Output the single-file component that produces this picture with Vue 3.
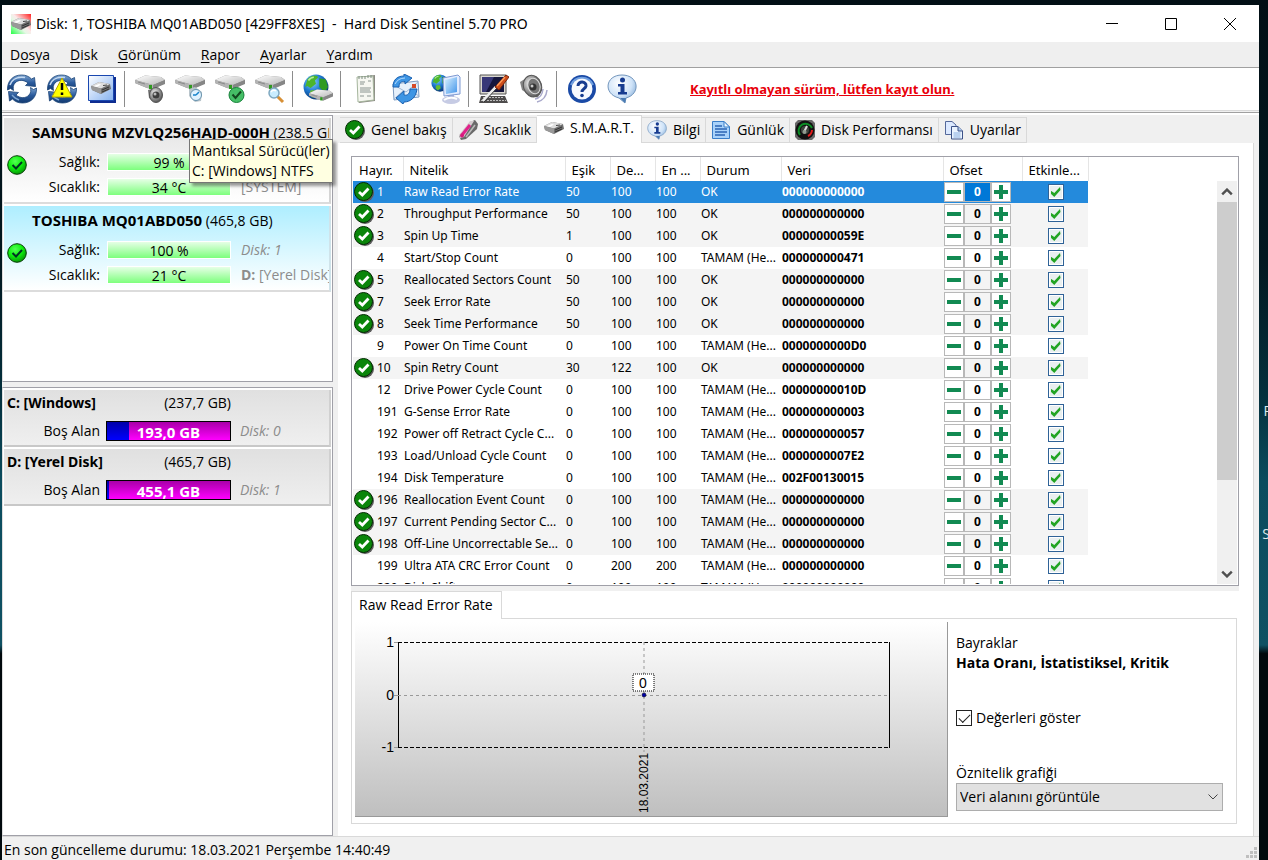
<script setup>
import { ref } from 'vue'

const menu = [
  ['D', 'o', 'sya'], ['', 'D', 'isk'], ['', 'G', 'örünüm'],
  ['', 'R', 'apor'], ['', 'A', 'yarlar'], ['', 'Y', 'ardım'],
]

const toolGroups = [
  ['refresh', 'refresh-warn', 'panel'],
  ['drive-sound', 'drive-clock', 'drive-ok', 'drive-search'],
  ['drive-web'],
  ['report', 'mail', 'network'],
  ['configure', 'speaker'],
  ['help', 'info'],
]

const disks = [
  { name: 'SAMSUNG MZVLQ256HAJD-000H', size: '(238.5 GB)', health: '99 %', temp: '34 °C', disk: 'Disk: 0', letter: '', vol: '[SYSTEM]' },
  { name: 'TOSHIBA MQ01ABD050', size: '(465,8 GB)', health: '100 %', temp: '21 °C', disk: 'Disk: 1', letter: 'D:', vol: '[Yerel Disk]', active: true },
]

const drives = [
  { name: 'C: [Windows]', size: '(237,7 GB)', free: '193,0 GB', used: 18, disk: 'Disk: 0' },
  { name: 'D: [Yerel Disk]', size: '(465,7 GB)', free: '455,1 GB', used: 2, disk: 'Disk: 1' },
]

const tabs = [
  { label: 'Genel bakış', icon: 'ok' },
  { label: 'Sıcaklık', icon: 'thermo' },
  { label: 'S.M.A.R.T.', icon: 'smart', active: true },
  { label: 'Bilgi', icon: 'info' },
  { label: 'Günlük', icon: 'page' },
  { label: 'Disk Performansı', icon: 'gauge' },
  { label: 'Uyarılar', icon: 'copies' },
]

const columns = ['Hayır.', 'Nitelik', 'Eşik', 'De...', 'En ...', 'Durum', 'Veri', 'Ofset', 'Etkinle...']

const T = 'TAMAM (He...'
const rows = ref([
  [1, 'Raw Read Error Rate', 50, 100, 100, 'OK', '000000000000', 1],
  [2, 'Throughput Performance', 50, 100, 100, 'OK', '000000000000', 1],
  [3, 'Spin Up Time', 1, 100, 100, 'OK', '00000000059E', 1],
  [4, 'Start/Stop Count', 0, 100, 100, T, '000000000471', 0],
  [5, 'Reallocated Sectors Count', 50, 100, 100, 'OK', '000000000000', 1],
  [7, 'Seek Error Rate', 50, 100, 100, 'OK', '000000000000', 1],
  [8, 'Seek Time Performance', 50, 100, 100, 'OK', '000000000000', 1],
  [9, 'Power On Time Count', 0, 100, 100, T, '0000000000D0', 0],
  [10, 'Spin Retry Count', 30, 122, 100, 'OK', '000000000000', 1],
  [12, 'Drive Power Cycle Count', 0, 100, 100, T, '00000000010D', 0],
  [191, 'G-Sense Error Rate', 0, 100, 100, T, '000000000003', 0],
  [192, 'Power off Retract Cycle C...', 0, 100, 100, T, '000000000057', 0],
  [193, 'Load/Unload Cycle Count', 0, 100, 100, T, '0000000007E2', 0],
  [194, 'Disk Temperature', 0, 100, 100, T, '002F00130015', 0],
  [196, 'Reallocation Event Count', 0, 100, 100, T, '000000000000', 1],
  [197, 'Current Pending Sector C...', 0, 100, 100, T, '000000000000', 1],
  [198, 'Off-Line Uncorrectable Se...', 0, 100, 100, T, '000000000000', 1],
  [199, 'Ultra ATA CRC Error Count', 0, 200, 200, T, '000000000000', 0],
  [220, 'Disk Shift', 0, 100, 100, T, '000000000000', 0],
].map(([id, name, threshold, value, worst, status, data, ok]) => (
  { id, name, threshold, value, worst, status, data, ok, offset: 0, enabled: true }
)))
const selected = ref(1)
const showValues = ref(true)
</script>

<template>
  <div class="desktop">
    <svg class="defs" aria-hidden="true">
      <defs>
        <linearGradient id="gTop" x1="0" y1="0" x2="1" y2="1"><stop offset="0" stop-color="#fff" /><stop offset="1" stop-color="#b9b9b9" /></linearGradient>
        <linearGradient id="gBlue" x1="0" y1="0" x2="0" y2="1"><stop offset="0" stop-color="#7ea6d2" /><stop offset=".5" stop-color="#2a5a9c" /><stop offset="1" stop-color="#123a70" /></linearGradient>
        <linearGradient id="gPanel" x1="0" y1="0" x2="1" y2="1"><stop offset="0" stop-color="#fff" /><stop offset="1" stop-color="#86b2f0" /></linearGradient>
        <radialGradient id="gGlobe" cx=".35" cy=".3" r=".75"><stop offset="0" stop-color="#8ad4ff" /><stop offset=".5" stop-color="#1f7ad2" /><stop offset="1" stop-color="#06316e" /></radialGradient>
        <radialGradient id="gBubble" cx=".4" cy=".3" r=".75"><stop offset="0" stop-color="#fff" /><stop offset=".6" stop-color="#cfe3f8" /><stop offset="1" stop-color="#7ea8d4" /></radialGradient>
        <radialGradient id="gGrey" cx=".4" cy=".35" r=".7"><stop offset="0" stop-color="#f4f4f4" /><stop offset=".6" stop-color="#8b8b8b" /><stop offset="1" stop-color="#4a4a4a" /></radialGradient>
        <radialGradient id="gLime" cx=".4" cy=".3" r=".75"><stop offset="0" stop-color="#5f5" /><stop offset=".5" stop-color="#0df20d" /><stop offset="1" stop-color="#078a07" /></radialGradient>
        <linearGradient id="gScreen" x1="0" y1="0" x2="1" y2="1"><stop offset="0" stop-color="#d8f1ff" /><stop offset="1" stop-color="#4596ea" /></linearGradient>
        <linearGradient id="gApp" x1="1" y1="0" x2="0" y2="1"><stop offset="0" stop-color="#f22" /><stop offset=".45" stop-color="#fbeaea" /><stop offset=".6" stop-color="#e6f8e6" /><stop offset="1" stop-color="#2f4" /></linearGradient>
      </defs>

      <symbol id="drive" viewBox="0 0 30 17">
        <path d="M0 5 10 0.5 26 2 30 5V9L18 14 12 13 0 8Z" fill="#878787" />
        <path d="M0 5 10 0.5 26 2 30 5 18 10Z" fill="url(#gTop)" />
        <path d="M0 5 18 10V14L12 13 0 8Z" fill="#b4b4b4" />
        <path d="M18 10 30 5V8L18 14Z" fill="#868686" />
        <path d="M3 7 10 9" stroke="#8a8a8a" fill="none" />
        <path d="M14 10h3v4h-3z" fill="#2e9a1e" />
      </symbol>

      <symbol id="hdd" viewBox="0 0 20 12">
        <path d="M0 4 8 0 19 2 20 7 10 12 1 8Z" fill="#707070" />
        <path d="M0 4 8 0 19 2 10 6.500Z" fill="#dedede" />
        <path d="M0 4 10 6.500V12L1 8Z" fill="#999" />
        <path d="M3 4 8 2 10 2.500 6 5Z" fill="#fff" />
        <path d="M11 8 18 5M11 10 18 7" stroke="#333" />
        <path d="M12 3.500 16 3" stroke="#444" />
      </symbol>

      <symbol id="refresh" viewBox="0 0 30 30">
        <path d="M0.500 16C0 7 6 1 14.500 1 19 1 22 2.500 24.500 5L27.500 3.500 28.500 12.500 18.500 11.500 21 9C17 5.500 11 5.500 8 9 6 11.500 6 13 6.500 16.500L3.500 14.500Z" fill="url(#gBlue)" stroke="#1d4577" stroke-width=".8" />
        <path d="M29.500 14C30 23 24 29 15.500 29 11 29 8 27.500 5.500 25L2.500 27 1.500 17.500 11.500 18.500 9 21C13 24.500 19 24.500 22 21 24 18.500 24 17 23.500 13.500L26.500 15.500Z" fill="url(#gBlue)" stroke="#1d4577" stroke-width=".8" />
        <path d="M3 11C5 5 11 2.500 18 3.500" stroke="#c5daf1" stroke-width="1.500" fill="none" />
        <path d="M5 21 8 24 12 26" stroke="#7fa7d4" stroke-width="1.500" fill="none" />
      </symbol>

      <symbol id="refresh-warn" viewBox="0 0 30 30">
        <use href="#refresh" />
        <path d="M15 4 25 23H5Z" fill="#ff0" stroke="#b8a800" stroke-linejoin="round" />
        <path d="M15 9v7M15 18.500v2.500" stroke="#000" stroke-width="2.500" />
      </symbol>

      <symbol id="panel" viewBox="0 0 30 30">
        <path d="M3 3H29V29H3Z" fill="#0e2c90" />
        <path d="M1.500 1.500H26.500V26.500H1.500Z" fill="url(#gPanel)" stroke="#1947b0" />
        <use href="#hdd" x="4" y="8" width="20" height="12" />
      </symbol>

      <symbol id="drive-sound" viewBox="0 0 30 30">
        <use href="#drive" width="30" height="17" y="1" />
        <path d="M13 16 20 14V28L14 24Z" fill="#777" />
        <ellipse cx="21" cy="21" rx="6.500" ry="7.500" fill="url(#gGrey)" stroke="#555" />
        <circle cx="21" cy="21" r="3.500" fill="#3c3c3c" /><circle cx="20" cy="20" r="1.500" fill="#bbb" />
      </symbol>
      <symbol id="drive-clock" viewBox="0 0 30 30">
        <use href="#drive" width="30" height="17" y="1" />
        <path d="M14 15 20 13 27 18 26 27 20 28 14 22Z" fill="#b8c4cb" />
        <circle cx="21" cy="21" r="5.500" fill="#dff2ff" stroke="#6792ac" />
        <path d="M21 21 24 18M21 21H18" stroke="#1683cb" stroke-width="1.500" />
      </symbol>
      <symbol id="drive-ok" viewBox="0 0 30 30">
        <use href="#drive" width="30" height="17" y="1" />
        <circle cx="21.500" cy="21" r="7.500" fill="#45bf66" stroke="#16813a" />
        <path d="M17.500 20.500 20.500 24 26 17.500" stroke="#12491f" stroke-width="2" fill="none" />
      </symbol>
      <symbol id="drive-search" viewBox="0 0 30 30">
        <use href="#drive" width="30" height="17" y="1" />
        <path d="M22 22 28 28" stroke="#d79036" stroke-width="3" />
        <circle cx="19" cy="19" r="5" fill="#c9edff" stroke="#7fa8c0" stroke-width="1.500" />
        <path d="M16 18Q18 15 21 17" stroke="#fff" stroke-width="1.500" fill="none" />
      </symbol>
      <symbol id="globe" viewBox="0 0 24 24">
        <circle cx="12" cy="12" r="11.500" fill="url(#gGlobe)" />
        <path d="M4 5C8 0 13 1 14 3L11 6 12 9 7 13 4 11 2 12Z" fill="#4cb52c" />
        <path d="M15 4 21 5 23 12 20 17 15 12Z" fill="#2f9a22" />
        <path d="M7 15 12 15 13 19 9 22 6 19Z" fill="#64bd30" />
        <path d="M5 6Q7 3 10 3" stroke="#b5f09b" stroke-width="1.500" fill="none" />
      </symbol>
      <symbol id="drive-web" viewBox="0 0 30 30">
        <use href="#globe" width="26" height="26" />
        <use href="#drive" x="6" y="15" width="24" height="14" />
      </symbol>
      <symbol id="report" viewBox="0 0 30 30">
        <path d="M7 3 24 1V27L8 29Z" fill="#8c8b84" />
        <path d="M6 3 22 2 23 26 7 28Z" fill="#f6f7f1" stroke="#a5b59c" />
        <path d="M8 2v3M11 2v3M14 2v3M17 1v3M20 1v3" stroke="#7c8c80" />
        <path d="M9 8h5M9 10h4M17 7h3M9 14h11M9 16h10M9 18h11M9 22h4M16 22h4" stroke="#8a9490" />
      </symbol>
      <symbol id="mail" viewBox="0 0 30 30">
        <path d="M2 10 27 7 28 23 3 26Z" fill="#e6f0fb" stroke="#7c9ac0" />
        <path d="M3 11 15 18 27 8M3 25 12 17M28 22 18 16" stroke="#9fb7d4" fill="none" />
        <path d="M21 10h4v4h-4z" fill="#d64a29" />
        <path d="M2 13C2 5 7 2 13 2V0L21 4 14 10V7.500C10 7 8 9 8 13Z" fill="#3d95e4" stroke="#1a60b0" />
        <path d="M26 15C25 24 19 28 13 28L12 30 5 24 13 17V21C17 22 19 19 19 15Z" fill="#3d95e4" stroke="#1a60b0" />
        <path d="M4 10Q7 4 14 4" stroke="#b5dcff" fill="none" />
      </symbol>
      <symbol id="network" viewBox="0 0 30 30">
        <use href="#globe" width="18" height="18" />
        <ellipse cx="20" cy="26" rx="9" ry="4" fill="#c6cbe4" />
        <path d="M17 19h6v6h-6z" fill="#aeb8dc" />
        <path d="M12 4 27 1 29 3V20L13 22Z" fill="#e2ecff" stroke="#7f9ad2" />
        <path d="M14 6 26 3V18L15 20Z" fill="url(#gScreen)" />
        <path d="M13 26Q19 22 26 25" stroke="#fff" stroke-width="2" fill="none" />
      </symbol>
      <symbol id="configure" viewBox="0 0 30 30">
        <path d="M1 1H27V20H1Z" fill="#dad8d0" stroke="#555" />
        <path d="M3 3H25V18H3Z" fill="#16163c" />
        <path d="M3 3H15L7 18H3Z" fill="#383878" />
        <path d="M2 22H26L29 29H0Z" fill="#4e4c4c" />
        <path d="M4 23.500H25M2 26.500H27" stroke="#bbb" stroke-dasharray="2 1" />
        <path d="M4 27 17 13" stroke="#eee" stroke-width="3" /><path d="M5 28 18 14" stroke="#333" />
        <path d="M16 13 27 1 30 3 20 16Z" fill="#cc4c1a" stroke="#78270c" />
        <path d="M18 12 26 3" stroke="#ff9a56" stroke-width="1.500" />
      </symbol>
      <symbol id="speaker" viewBox="0 0 30 30">
        <path d="M1 8 12 1 20 24 12 22 3 16Z" fill="#858585" />
        <ellipse cx="13.500" cy="12" rx="9" ry="11" transform="rotate(-18 14 12)" fill="url(#gGrey)" stroke="#555" />
        <ellipse cx="15" cy="12" rx="6" ry="8" transform="rotate(-18 15 12)" fill="#777" stroke="#ddd" />
        <circle cx="14" cy="13" r="3.500" fill="#333" /><circle cx="13" cy="12" r="1.500" fill="#ccc" />
        <path d="M16 25Q23 24 24 15M18 28Q27 26 28 16" stroke="#a9a9cb" stroke-width="1.500" fill="none" />
      </symbol>
      <symbol id="help" viewBox="0 0 30 30">
        <circle cx="15" cy="15" r="14" fill="#1a4aa6" /><path d="M4 11A12 12 0 0 1 26 11" stroke="#6f9fe0" stroke-width="2" fill="none" />
        <circle cx="15" cy="15" r="10.500" fill="#f7faff" />
        <path d="M11 12C11 6.500 19.500 7 19 12 18.500 15 15 14.500 15 18" stroke="#173c90" stroke-width="3" fill="none" />
        <circle cx="15" cy="21.500" r="1.800" fill="#173c90" />
      </symbol>
      <symbol id="info" viewBox="0 0 30 30">
        <path d="M15 1C32 1 34 20 19 24L18 29 12 24C-4 20-2 1 15 1Z" fill="url(#gBubble)" stroke="#7396bd" />
        <path d="M19 24 18 29 13 24" fill="#4b7cb4" />
        <circle cx="15.500" cy="6" r="2.500" fill="#173c90" />
        <path d="M11 10H17.500V18H20V20.500H11V18H13.500V12.500H11Z" fill="#173c90" />
      </symbol>
      <symbol id="ok" viewBox="0 0 20 20">
        <circle cx="11" cy="11" r="9" fill="#5c5c5c" />
        <circle cx="9.500" cy="9.500" r="9" fill="#0a850a" stroke="#012a01" />
        <path d="M5 10 8.300 13 14.500 6.500" stroke="#fff" stroke-width="2.800" fill="none" />
      </symbol>
      <symbol id="lime" viewBox="0 0 20 20">
        <circle cx="10" cy="10" r="9.300" fill="url(#gLime)" stroke="#063d06" />
        <path d="M5.500 10 9 13.500 15 7" stroke="#032" stroke-width="2" fill="none" />
      </symbol>
      <symbol id="thermo" viewBox="0 0 20 20">
        <path d="M1 16 12 2 17 0 20 4 19 9 8 19 3 20Z" fill="#696969" />
        <path d="M1 15 12 1 16 1 6 17 2 18Z" fill="#d5ccd0" />
        <path d="M4 15 12 5" stroke="#e0218a" stroke-width="3" /><path d="M8 17 17 5" stroke="#bbb" stroke-width="1.500" />
        <circle cx="4" cy="15.500" r="2" fill="#d41b7c" />
      </symbol>
      <symbol id="smart" viewBox="0 0 20 20"><use href="#hdd" y="4" width="20" height="12" /></symbol>
      <symbol id="page" viewBox="0 0 20 20">
        <path d="M1.500 1.500H13L18.500 7V18.500H1.500Z" fill="#a9d2fa" stroke="#3a7ec8" />
        <path d="M13 1.500V7H18.500Z" fill="#edf7ff" stroke="#3a7ec8" />
        <path d="M4 6h7M4 9h12M4 12h12M4 15h10" stroke="#2b64b4" stroke-width="1.500" />
      </symbol>
      <symbol id="gauge" viewBox="0 0 20 20">
        <path d="M3 0H17L20 3V17L17 20H3L0 17V3Z" fill="#6a6a6a" />
        <circle cx="10" cy="10" r="9.500" fill="#111" /><path d="M5 15A7 7 0 1 1 17 8" stroke="#0b8d25" stroke-width="2" fill="none" />
        <path d="M17 10A7 7 0 0 1 13 16" stroke="#e21a1a" stroke-width="2" fill="none" />
        <circle cx="10" cy="10" r="4" fill="#3d443d" />
        <path d="M9 12 12 6" stroke="#ddd" stroke-width="2" /><circle cx="9.500" cy="12" r="2" fill="#8f9b8f" />
      </symbol>
      <symbol id="copies" viewBox="0 0 20 20">
        <path d="M1.500 1.500H8L12 5V14.500H1.500Z" fill="#dce9ff" stroke="#54689a" />
        <path d="M7.500 6.500H14L18.500 11V19H7.500Z" fill="#eaf3ff" stroke="#3c5288" />
        <path d="M14 6.500V11H18.500" fill="#b0cbed" stroke="#3c5288" /><path d="M9.500 13h7M9.500 15h7M9.500 17h7" stroke="#88aee0" />
      </symbol>
      <symbol id="sentinel" viewBox="0 0 20 20">
        <path d="M0 0H20V20H0Z" fill="url(#gApp)" /><use href="#hdd" y="4" width="20" height="12" />
      </symbol>
    </svg>

    <span class="peek peek-p">P</span>
    <span class="peek peek-s">S</span>

    <div class="window">
      <header class="titlebar">
        <svg class="i20"><use href="#sentinel" /></svg>
        <h1>Disk: 1, TOSHIBA MQ01ABD050 [429FF8XES]&nbsp; -&nbsp; Hard Disk Sentinel 5.70 PRO</h1>
        <button class="winbtn" aria-label="Simge durumuna küçült"><svg viewBox="0 0 12 12"><path d="M0 5.500H12" /></svg></button>
        <button class="winbtn" aria-label="Ekranı kapla"><svg viewBox="0 0 12 12"><path d="M.5.500H11.500V11.500H.5Z" /></svg></button>
        <button class="winbtn" aria-label="Kapat"><svg viewBox="0 0 12 12"><path d="M0 0 12 12M12 0 0 12" /></svg></button>
      </header>

      <nav class="menubar">
        <button v-for="m in menu" :key="m[2]">{{ m[0] }}<u>{{ m[1] }}</u>{{ m[2] }}</button>
      </nav>

      <div class="toolbar">
        <div v-for="(g, i) in toolGroups" :key="i" class="group">
          <button v-for="t in g" :key="t" :aria-label="t"><svg><use :href="'#' + t" /></svg></button>
        </div>
        <a href="#" class="register">Kayıtlı olmayan sürüm, lütfen kayıt olun.</a>
      </div>
      <div class="edge"></div>

      <div class="body">
        <aside class="side">
          <section class="well disks">
            <article v-for="d in disks" :key="d.name" class="disk" :class="{ active: d.active }">
              <h2><b>{{ d.name }}</b> {{ d.size }}</h2>
              <svg class="i20 lamp"><use href="#lime" /></svg>
              <span class="lbl">Sağlık:</span><span class="meter">{{ d.health }}</span><i class="note">{{ d.disk }}</i>
              <span class="lbl">Sıcaklık:</span><span class="meter">{{ d.temp }}</span>
              <span class="note"><b>{{ d.letter }}</b> {{ d.vol }}</span>
            </article>
            <div class="tooltip">Mantıksal Sürücü(ler)<br>C: [Windows] NTFS</div>
          </section>
          <section class="well drives">
            <article v-for="d in drives" :key="d.name" class="drive">
              <b class="dname">{{ d.name }}</b><span class="dsize">{{ d.size }}</span>
              <span class="lbl">Boş Alan</span>
              <span class="space"><span class="used" :style="{ width: d.used + '%' }"></span><b>{{ d.free }}</b></span>
              <i class="note">{{ d.disk }}</i>
            </article>
          </section>
        </aside>

        <main class="main">
          <div class="tabs" role="tablist">
            <button v-for="t in tabs" :key="t.label" role="tab" :class="{ active: t.active }" :aria-selected="!!t.active">
              <svg class="i20"><use :href="'#' + t.icon" /></svg>{{ t.label }}
            </button>
          </div>

          <div class="page">
            <div class="grid">
              <div class="clip">
                <table>
                  <colgroup><col v-for="(c, i) in columns" :key="c" :class="'c' + i"></colgroup>
                  <thead><tr><th v-for="c in columns" :key="c">{{ c }}</th></tr></thead>
                  <tbody>
                    <tr v-for="r in rows" :key="r.id" :class="{ ok: r.ok, sel: r.id === selected }" @click="selected = r.id">
                      <td><div class="num"><svg class="i20"><use v-if="r.ok" href="#ok" /></svg>{{ r.id }}</div></td>
                      <td>{{ r.name }}</td><td>{{ r.threshold }}</td><td>{{ r.value }}</td><td>{{ r.worst }}</td>
                      <td>{{ r.status }}</td><td class="data">{{ r.data }}</td>
                      <td>
                        <div class="spin">
                          <button aria-label="Azalt" @click="r.offset--"><svg viewBox="0 0 16 16"><path d="M1 8H15" /></svg></button>
                          <input v-model="r.offset" type="text" :aria-label="'Ofset ' + r.id">
                          <button aria-label="Artır" @click="r.offset++"><svg viewBox="0 0 16 16"><path d="M1 8H15M8 1V15" /></svg></button>
                        </div>
                      </td>
                      <td class="en"><input v-model="r.enabled" type="checkbox" :aria-label="'Etkinleştir ' + r.id"></td>
                    </tr>
                  </tbody>
                </table>
              </div>
              <div class="scroll">
                <button aria-label="Yukarı"><svg viewBox="0 0 10 6"><path d="M1 5 5 1 9 5" /></svg></button>
                <div class="track"><div class="thumb"></div></div>
                <button aria-label="Aşağı"><svg viewBox="0 0 10 6"><path d="M1 1 5 5 9 1" /></svg></button>
              </div>
            </div>
            <div class="splitter"></div>

            <div class="detail">
              <button class="dtab">Raw Read Error Rate</button>
              <div class="dpanel">
                <div class="chart">
                  <svg class="plot">
                    <g class="axis">
                      <text x="39" y="25">1</text><text x="39" y="78">0</text><text x="39" y="130">-1</text>
                      <path d="M39 20.500H43M39 73.500H43M39 125.500H43" class="tick" />
                    </g>
                    <svg x="43" y="20" class="area" height="175">
                      <path d="M.5 0V106" class="solid" />
                      <g class="right"><path d="M-.5 0V106" class="solid" /></g>
                      <line x1="0" x2="100%" y1=".5" y2=".5" class="frame" /><line x1="0" x2="100%" y1="105.500" y2="105.500" class="frame" />
                      <line x1="0" x2="100%" y1="53.500" y2="53.500" class="guide" />
                      <line x1="50%" x2="50%" y1="0" y2="110" class="guide" />
                      <svg x="50%" class="mark">
                        <rect x="-11" y="32" width="21" height="17" class="box" />
                        <text x="-1" y="46" text-anchor="middle">0</text>
                        <circle cx="0" cy="53" r="2" fill="#00a" stroke="#000" stroke-width=".5" />
                        <text class="date" transform="translate(4 171) rotate(-90)">18.03.2021</text>
                      </svg>
                    </svg>
                  </svg>
                </div>
                <div class="opts">
                  <p>Bayraklar</p>
                  <p><b>Hata Oranı, İstatistiksel, Kritik</b></p>
                  <label class="show"><input v-model="showValues" type="checkbox">Değerleri göster</label>
                  <label for="mode">Öznitelik grafiği</label>
                  <div class="select">
                    <select id="mode"><option>Veri alanını görüntüle</option></select>
                    <svg viewBox="0 0 10 6"><path d="M.5.500 5 5 9.500.5" /></svg>
                  </div>
                </div>
              </div>
            </div>
          </div>
        </main>
      </div>

      <footer class="status">
        <span>En son güncelleme durumu: 18.03.2021 Perşembe 14:40:49</span>
        <svg viewBox="0 0 11 11"><path d="M8 0h3v3H8zM4 4h3v3H4zM8 4h3v3H8zM0 8h3v3H0zM4 8h3v3H4zM8 8h3v3H8z" /></svg>
      </footer>
    </div>
  </div>
</template>

<style>
html, body { margin: 0; height: 100%; overflow: hidden; }
</style>

<style scoped>
* { box-sizing: border-box; }
button { font: inherit; color: inherit; background: none; border: 0; padding: 0; margin: 0; }
.desktop {
  position: relative; display: flex; height: 100vh; padding: 5px 9px 0 2px; overflow: hidden;
  background: linear-gradient(#020f15 0, #021820 30%, #04303d 46%, #0b4c5e 56%, #0f5163 75%, #01090d 76%);
  font: 14px/20px "Open Sans", "Noto Sans", sans-serif; color: #000;
}
.defs { position: absolute; width: 0; height: 0; }
.peek { position: absolute; right: -4px; color: #dfe9ec; }
.peek-p { top: 401px; }
.peek-s { top: 524px; right: -2px; }
.window { flex: 1; min-width: 0; display: flex; flex-direction: column; background: #f0f0f0; }
.i20 { width: 20px; height: 20px; flex: none; }

.titlebar { display: flex; align-items: center; height: 37px; padding-left: 9px; background: #fff; flex: none; }
.titlebar h1 { flex: 1; margin: 0 0 0 5px; font: 400 14px/20px "Noto Sans", sans-serif; white-space: nowrap; }
.winbtn { width: 59px; height: 36px; display: grid; place-items: center; }
.winbtn svg { width: 12px; height: 12px; stroke: #000; fill: none; }
.menubar { display: flex; height: 25px; padding: 0 0 0 8px; gap: 20px; background: #efefef; flex: none; }
.menubar u { text-underline-offset: 2px; }
.toolbar { display: flex; align-items: center; height: 43px; background: #fff; border-top: 1px solid #a0a0a0; flex: none; }
.group { display: flex; }
.group + .group { margin-left: 2px; padding-left: 5px; border-left: 1px solid #8c8c8c; }
.group button { width: 40px; height: 36px; display: grid; place-items: center; }
.group svg { width: 30px; height: 30px; }
.register { margin-left: 48px; color: #e8000a; font: 700 13px/20px "Noto Sans", sans-serif; white-space: nowrap; }
.edge { height: 5px; flex: none; background: linear-gradient(#d9d9d9 1px, #f0f0f0 1px 2px, #a0a0a0 2px 3px, #fff 3px); }

.body { flex: 1; min-height: 0; display: flex; gap: 5px; }
.side { width: 331px; display: flex; flex-direction: column; gap: 5px; }
.well { background: #fff; border: 1px solid #a0a0a8; border-left-color: #ddd; padding: 2px 1px; }
.disks { position: relative; height: 267px; }
.drives { flex: 1; }
.disk {
  display: grid; grid-template-columns: 23px 76px 124px 1fr; column-gap: 2px; row-gap: 7px; align-items: center;
  height: 86px; margin-bottom: 2px; overflow: hidden; white-space: nowrap; grid-template-rows: 28px 18px 18px;
  background: linear-gradient(#e2e2e2, #fff); border-right: 2px solid #d4d4d4; border-bottom: 2px solid #dcdcdc;
}
.disk.active { background: linear-gradient(#aeeeff, #fff); border-right-color: #cfe3ea; }
.disk h2 { grid-column: 1 / -1; margin: 0 0 0 28px; font-size: 14px; font-weight: 400; line-height: 20px; }
.disk h2 b { font-size: 15px; }
.lamp { grid-row: 2 / 4; grid-column: 1; align-self: start; margin: 2px 0 0 3px; }
.lbl { grid-column: 2; text-align: right; padding-right: 5px; }
.meter { height: 18px; border: 1px solid #fff; text-align: center; line-height: 18px; background: linear-gradient(#e6ffe6, #7dff7d); }
.note { color: #8c8c8c; padding-left: 8px; overflow: hidden; }
.tooltip {
  position: absolute; left: 186px; top: 23px; padding: 1px 2px; white-space: nowrap; right: -1px;
  background: #ffffe1; border: 1px solid #767676; box-shadow: 3px 3px 3px rgba(0, 0, 0, .4);
}
.drive {
  display: grid; grid-template-columns: 101px 125px 1fr; grid-template-rows: 26px 30px; column-gap: 1px; align-items: center;
  height: 57px; margin-bottom: 2px; background: linear-gradient(#e0e0e0, #efefef); border-right: 2px solid #d0d0d0; border-bottom: 2px solid #c8c8c8;
  white-space: nowrap;
}
.dname { padding-left: 3px; font-family: "Noto Sans", sans-serif; }
.dsize { text-align: right; grid-column: 2 / 3; }
.drive .lbl { grid-column: 1; }
.space { position: relative; height: 20px; border: 1px solid #000; background: linear-gradient(#a800a8, #f0f); color: #fff; text-align: center; line-height: 20px; }
.used { position: absolute; left: 0; top: 0; bottom: 0; background: linear-gradient(#0000a8, #00f); }
.space b { position: relative; font-size: 15px; }

.main { flex: 1; min-width: 0; display: flex; flex-direction: column; border-right: 5px solid #f0f0f0; }
.tabs { display: flex; align-items: flex-end; height: 28px; padding-left: 2px; flex: none; }
.tabs button { display: flex; align-items: center; gap: 6px; height: 26px; padding: 0 5px; white-space: nowrap; border: 1px solid #d9d9d9; border-left-width: 0; }
.tabs button.active { height: 28px; padding: 0 7px 4px; background: #fff; border-bottom: 0; }
.page { flex: 1; min-height: 0; display: flex; flex-direction: column; padding: 13px 14px 12px 13px; background: #fff; border-right: 1px solid #d9d9d9; }
.grid { display: flex; flex: 1; min-height: 0; border: 1px solid #a0a0a8; padding: 0 1px 1px 1px; }
.clip { flex: 1; overflow: hidden; min-width: 0; }
table { width: 735px; table-layout: fixed; border-collapse: collapse; font: 12px/20px "Noto Sans", sans-serif; }
.c0 { width: 50px; } .c1 { width: 162px; } .c2, .c3, .c4 { width: 45px; }
.c5 { width: 81px; } .c6 { width: 162px; } .c7 { width: 79px; } .c8 { width: 66px; }
th { height: 24px; padding: 2px 0 0 6px; text-align: left; font-weight: 400; font-size: 13px; line-height: 20px; border-right: 1px solid #e5e5e5; white-space: nowrap; }
td { height: 22px; padding: 0 0 0 1px; white-space: nowrap; overflow: hidden; line-height: 20px; }
tr.ok td { background: #f4f4f4; }
tr.sel td { background: #248adc; color: #fff; }
.num { display: flex; align-items: center; gap: 3px; }
td.data { font-weight: 700; }
.spin { display: flex; width: 67px; height: 20px; border: 1px solid #b8b8b8; background: #b8b8b8; gap: 2px; }
.spin button { width: 18px; height: 18px; background: #fff; display: grid; place-items: center; }
.spin svg { width: 16px; height: 16px; stroke: #128a52; stroke-width: 4; }
.spin input { width: 25px; height: 18px; padding: 0; border: 0; text-align: center; font: 700 12px/18px "Noto Sans", sans-serif; background: #fff; }
.sel .spin input { background: #0078d7; color: #fff; }
.ok:not(.sel) .spin input { background: #f4f4f4; }
.en input { appearance: none; display: block; width: 16px; height: 16px; margin: 0 auto; border: 1px solid #2f6297; background: #e9eff0; box-shadow: inset 0 0 0 1px #fff; }
.en input:checked::before { content: ""; display: block; width: 10px; height: 10px; margin: 2px; background: #23a423; clip-path: polygon(0 35%, 38% 60%, 95% 0, 100% 30%, 38% 100%, 0 65%); }
.scroll { width: 20px; margin-top: 24px; background: #f0f0f0; display: flex; flex-direction: column; }
.scroll button { height: 21px; display: grid; place-items: center; flex: none; }
.scroll svg { width: 12px; height: 8px; fill: none; stroke: #505050; stroke-width: 2; }
.track { flex: 1; min-height: 0; }
.thumb { height: 77%; background: #cdcdcd; }
.splitter { height: 5px; background: #f0f0f0; flex: none; }

.detail { flex: none; }
.dtab { display: block; position: relative; height: 28px; padding: 0 8px 2px 7px; background: #fff; border: 1px solid #d9d9d9; border-bottom: 0; margin-bottom: -1px; }
.dpanel { display: flex; border: 1px solid #d9d9d9; padding: 3px; height: 206px; margin-right: 2px; }
.chart { flex: 1; min-width: 0; height: 195px; background: linear-gradient(#fff, #bfbfbf); border-right: 1px solid #999; border-bottom: 1px solid #999; }
.plot { display: block; width: 100%; height: 100%; font: 14px "Liberation Sans", Arial, sans-serif; overflow: hidden; }
.area { width: calc(100% - 100px); overflow: visible; }
.mark, .right { overflow: visible; }
.right { transform: translateX(100%); transform-box: view-box; }
.axis text { text-anchor: end; }
.tick { stroke: #999; }
.solid { stroke: #000; }
.frame { stroke: #000; stroke-dasharray: 4 2; }
.guide { stroke: #999; stroke-dasharray: 3 3; }
.box { fill: #fff; stroke: #000; stroke-dasharray: 1 1; }
.date { font-size: 12px; }
.opts { width: 285px; flex: none; padding: 11px 10px 0 8px; }
.opts p { margin: 0; }
.show { display: flex; align-items: center; gap: 4px; margin: 35px 0; }
.show input { appearance: none; width: 16px; height: 16px; margin: 0; border: 1px solid #222; background: #fff; }
.show input:checked::before { content: ""; display: block; width: 10px; height: 5px; margin: 3px 2px; border-left: 1px solid #222; border-bottom: 1px solid #222; transform: rotate(-45deg); }
.select { position: relative; }
.select select { appearance: none; display: block; width: 100%; height: 28px; padding: 0 3px; border: 1px solid #adadad; border-radius: 0; background: #e1e1e1; font: inherit; color: #000; }
.select svg { position: absolute; right: 5px; top: 11px; width: 10px; height: 6px; fill: none; stroke: #444; }

.status { display: flex; align-items: center; justify-content: space-between; height: 24px; flex: none; padding: 2px 2px 0; background: #f0f0f0; border-top: 1px solid #d9d9d9; }
.status svg { width: 11px; height: 11px; fill: #bfbfbf; align-self: flex-end; margin-bottom: 2px; }
</style>
